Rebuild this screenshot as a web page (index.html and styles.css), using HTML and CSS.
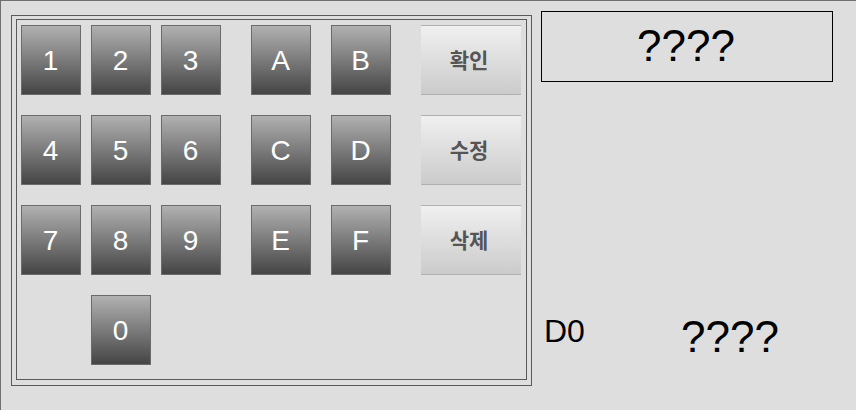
FILE: index.html
```html
<!DOCTYPE html>
<html lang="ko">
<head>
    <meta charset="UTF-8">
    <meta name="viewport" content="width=device-width, initial-scale=1.0">
    <title>Keypad</title>
    <link rel="stylesheet" href="styles.css">
</head>
<body>
    <div class="screen">
        <!-- keypad group box -->
        <div class="group-box">
            <div class="group-inner">
                <div class="keypad">
                    <button class="key">1</button>
                    <button class="key">2</button>
                    <button class="key">3</button>
                    <button class="key key-hex">A</button>
                    <button class="key key-hex">B</button>
                    <button class="cmd">확인</button>

                    <button class="key">4</button>
                    <button class="key">5</button>
                    <button class="key">6</button>
                    <button class="key key-hex">C</button>
                    <button class="key key-hex">D</button>
                    <button class="cmd">수정</button>

                    <button class="key">7</button>
                    <button class="key">8</button>
                    <button class="key">9</button>
                    <button class="key key-hex">E</button>
                    <button class="key key-hex">F</button>
                    <button class="cmd">삭제</button>

                    <button class="key key-zero">0</button>
                </div>
            </div>
        </div>

        <div class="side-panel">
            <div class="display">????</div>
            <div class="info-row">
                <span class="info-label">D0</span>
                <span class="info-value">????</span>
            </div>
        </div>
    </div>
</body>
</html>
```

FILE: styles.css
```css
* {
    box-sizing: border-box;
}

body {
    margin: 0;
    background-color: #dedede;
    font-family: 'Liberation Sans', Arial, sans-serif;
}

.screen {
    display: flex;
    align-items: flex-start;
    gap: 9px;
    width: 856px;
    height: 410px;
    padding: 10px 0 0 10px;
    border-top: 1px solid #707070;
    border-left: 1px solid #707070;
}

.group-box {
    width: 521px;
    height: 371px;
    margin-top: 4px;
    padding: 3px 4px 5px 4px;
    border: 1px solid #5a5a5a;
}

.group-inner {
    height: 100%;
    padding: 5px 0 0 4px;
    border: 1px solid #5a5a5a;
}

.keypad {
    display: grid;
    grid-template-columns: 60px 60px 60px 80px 70px 120px;
    grid-auto-rows: 70px;
    column-gap: 10px;
    row-gap: 20px;
}

.key {
    width: 60px;
    height: 70px;
    padding: 2px 1px 0 0;
    border: 1px solid #6b6b6b;
    background: linear-gradient(to bottom, #b1b1b1, #454545);
    color: #fff;
    font-family: 'Liberation Sans', Arial, sans-serif;
    font-size: 28px;
    cursor: pointer;
}

.key-hex {
    justify-self: end;
}

.key-zero {
    grid-column: 2;
}

.cmd {
    justify-self: end;
    width: 100px;
    height: 70px;
    padding: 0 4px 2px 0;
    border: none;
    border-top: 1px solid #b0b0b0;
    border-bottom: 1px solid #b0b0b0;
    background: linear-gradient(to bottom, #f0f0f0, #cbcbcb);
    color: #555;
    font-family: 'Noto Sans CJK KR', sans-serif;
    font-size: 21px;
    font-weight: bold;
    cursor: pointer;
}

.side-panel {
    display: flex;
    flex-direction: column;
    width: 292px;
}

.display {
    display: flex;
    align-items: center;
    justify-content: center;
    height: 71px;
    padding: 0 2px 2px 0;
    border: 1px solid #000;
    font-size: 44px;
}

.info-row {
    display: flex;
    align-items: flex-start;
    margin-top: 233px;
    padding-left: 3px;
}

.info-label {
    width: 137px;
    margin-top: 0;
    font-size: 32px;
    line-height: 1;
}

.info-value {
    font-size: 44px;
    line-height: 1;
}
```
